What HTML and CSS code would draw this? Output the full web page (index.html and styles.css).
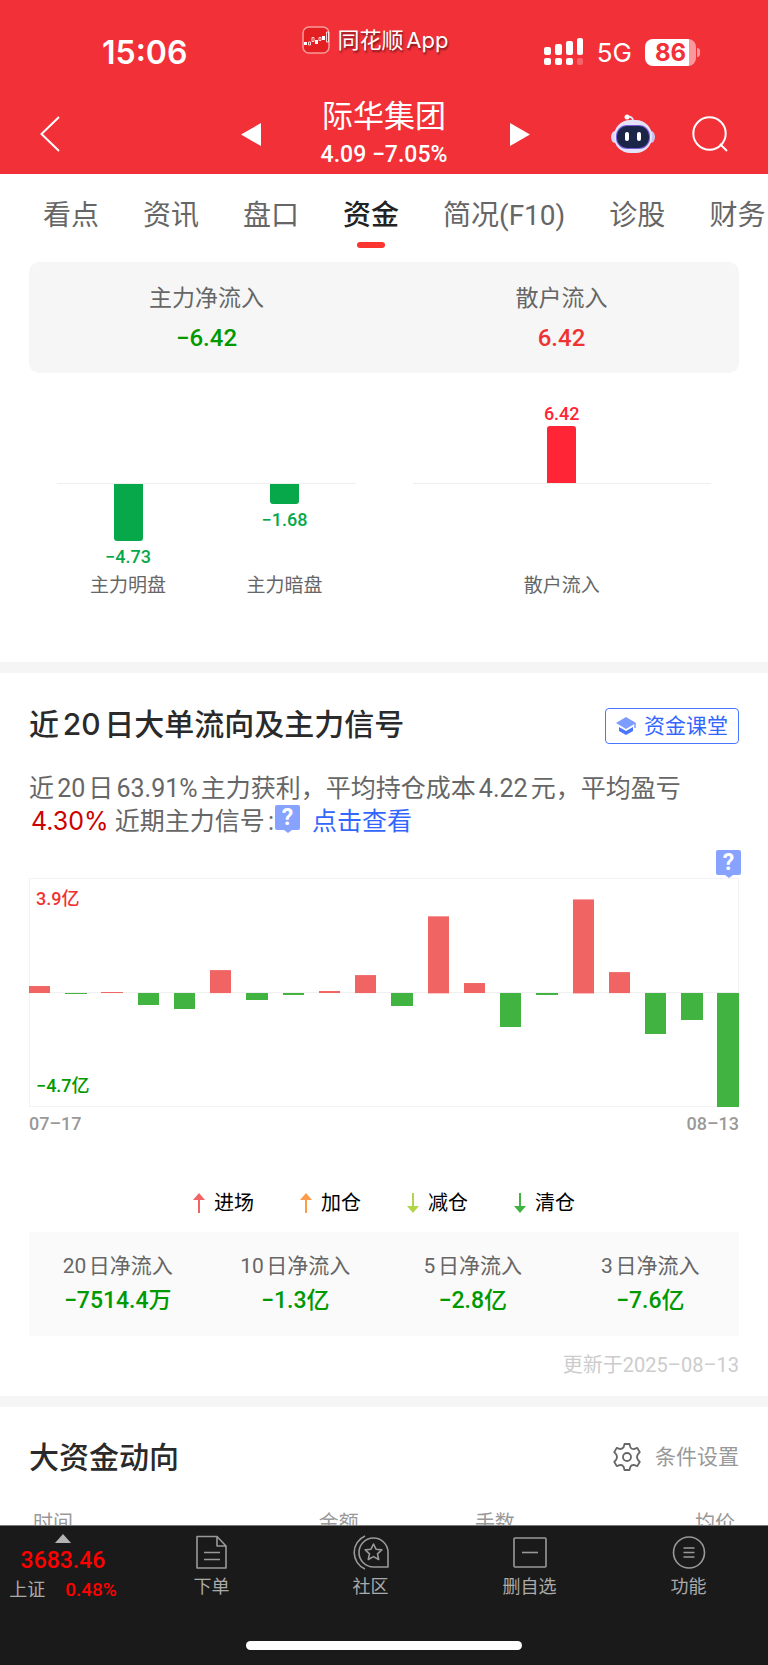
FILE: index.html
```
<!DOCTYPE html>
<html lang="zh-CN">
<head>
    <meta charset="UTF-8">
    <meta name="viewport" content="width=device-width, initial-scale=1.0">
    <title>际华集团 资金</title>
    <link rel="stylesheet" href="styles.css">
</head>
<body>
    <header class="header">
        <div class="status">
            <span class="time">15:06</span>
            <div class="app">
                <svg width="28" height="28" viewBox="0 0 28 28">
                    <rect x="1" y="1" width="26" height="26" rx="6" fill="#e31f22" stroke="#f79a9c" stroke-width="1.5"/>
                    <path d="M2 16h3v3H2zM13 14h3v4h-3zM20 10h3v4h-3z" fill="#fff"/>
                    <path d="M6.500 16h2v3h-2zM10 11.500h2v4h-2zM17 11.500h2v3h-2zM24.500 6h2v10h-2z" fill="none" stroke="#fff" stroke-width=".8"/>
                </svg>
                <span>同花顺App</span>
            </div>
            <div class="phone">
                <svg width="40" height="28" viewBox="0 0 40 28" fill="#fff">
                    <rect x="0" y="9" width="7" height="8" rx="2"/>
                    <rect x="11" y="6" width="7" height="11" rx="2"/>
                    <rect x="22" y="3" width="7" height="14" rx="2"/>
                    <rect x="33" y="0" width="6" height="17" rx="2"/>
                    <rect x="0" y="20" width="7" height="7" rx="2"/>
                    <rect x="11" y="20" width="7" height="7" rx="2"/>
                    <rect x="22" y="20" width="7" height="7" rx="2"/>
                    <rect x="33" y="20" width="6" height="7" rx="2" opacity=".25"/>
                </svg>
                <span class="net">5G</span>
                <span class="battery">86</span>
            </div>
        </div>
        <div class="titlebar">
            <div class="tleft">
                <button class="icon" aria-label="返回">
                    <svg width="20" height="36" viewBox="0 0 20 36" fill="none" stroke="#fff" stroke-width="2"><path d="M19 1L1.500 18L19 35"/></svg>
                </button>
                <button class="icon" aria-label="上一只">
                    <svg width="20" height="23" viewBox="0 0 20 23" fill="#fff"><path d="M20 0v23L0 11.500z"/></svg>
                </button>
            </div>
            <div class="stock">
                <h1>际华集团</h1>
                <p class="num">4.09 −7.05%</p>
            </div>
            <div class="tright">
                <button class="icon" aria-label="下一只">
                    <svg width="20" height="23" viewBox="0 0 20 23" fill="#fff"><path d="M0 0v23l20-11.500z"/></svg>
                </button>
                <button class="icon robot" aria-label="智能助手">
                    <svg width="44" height="40" viewBox="0 0 44 40">
                        <path d="M16 3q6-1 6 4" fill="none" stroke="#e6e4fa" stroke-width="2"/>
                        <circle cx="16" cy="3" r="2.500" fill="#fff"/>
                        <ellipse cx="4" cy="23" rx="4" ry="6" fill="#d9d5f5"/>
                        <ellipse cx="40" cy="23" rx="4" ry="6" fill="#c9c4ef"/>
                        <rect x="3" y="6" width="38" height="33" rx="16" fill="#e4e3f8"/>
                        <rect x="5" y="11" width="34" height="24" rx="11" fill="#7a5be0"/>
                        <rect x="6" y="12" width="32" height="22" rx="10" fill="#1b2547"/>
                        <rect x="14" y="18" width="4" height="9" rx="2" fill="#fff"/>
                        <rect x="26" y="18" width="4" height="9" rx="2" fill="#fff"/>
                    </svg>
                </button>
                <button class="icon" aria-label="搜索">
                    <svg width="36" height="36" viewBox="0 0 36 36" fill="none" stroke="#fff" stroke-width="2"><circle cx="17.500" cy="17.500" r="16.200"/><path d="M28 28l7 7"/></svg>
                </button>
            </div>
        </div>
    </header>

    <nav class="tabs">
        <a href="#">看点</a>
        <a href="#">资讯</a>
        <a href="#">盘口</a>
        <a href="#" class="active">资金</a>
        <a href="#">简况(F10)</a>
        <a href="#">诊股</a>
        <a href="#">财务</a>
    </nav>

    <main>
        <section class="flow">
            <div class="card">
                <div>
                    <p>主力净流入</p>
                    <p class="num green">−6.42</p>
                </div>
                <div>
                    <p>散户流入</p>
                    <p class="num red">6.42</p>
                </div>
            </div>
            <div class="charts">
                <div class="chart">
                    <div class="col">
                        <div class="up"></div>
                        <div class="down"><i style="height:57px"></i><span class="num">−4.73</span></div>
                        <p>主力明盘</p>
                    </div>
                    <div class="col">
                        <div class="up"></div>
                        <div class="down"><i style="height:20px"></i><span class="num">−1.68</span></div>
                        <p>主力暗盘</p>
                    </div>
                </div>
                <div class="chart single">
                    <div class="col">
                        <div class="up"><span class="num">6.42</span><i style="height:57px"></i></div>
                        <div class="down"></div>
                        <p>散户流入</p>
                    </div>
                </div>
            </div>
        </section>

        <section class="signal">
            <div class="head">
                <h2>近20日大单流向及主力信号</h2>
                <button class="course">
                    <svg width="20" height="20" viewBox="0 0 20 20">
                        <path d="M10 1L0 7l10 6 10-6z" fill="#7d9cff"/>
                        <path d="M3 11v4l7 4 7-4v-4l-7 4z" fill="#4a76ff"/>
                        <path d="M19 7v5" stroke="#7d9cff" stroke-width="1.500"/>
                    </svg>
                    资金课堂
                </button>
            </div>
            <p class="desc">近20日63.91%主力获利，平均持仓成本4.22元，平均盈亏<br><b>4.30%</b> 近期主力信号:<button class="help" aria-label="说明">?</button><a href="#">点击查看</a></p>
            <div class="history">
                <button class="help" aria-label="图表说明">?</button>
                <span class="num max">3.9亿</span>
                <span class="num min">−4.7亿</span>
                <div class="bars" id="bars"></div>
            </div>
            <div class="dates num"><span>07–17</span><span>08–13</span></div>
            <ul class="legend">
                <li><svg width="12" height="20" viewBox="0 0 12 20" fill="#f06464"><path d="M6 0l6 7H7v13H5V7H0z"/></svg>进场</li>
                <li><svg width="12" height="20" viewBox="0 0 12 20" fill="#ff9c4a"><path d="M6 0l6 7H7v13H5V7H0z"/></svg>加仓</li>
                <li><svg width="12" height="20" viewBox="0 0 12 20" fill="#b2d54c"><path d="M6 20l6-7H7V0H5v13H0z"/></svg>减仓</li>
                <li><svg width="12" height="20" viewBox="0 0 12 20" fill="#41b341"><path d="M6 20l6-7H7V0H5v13H0z"/></svg>清仓</li>
            </ul>
            <div class="stats">
                <div><p>20日净流入</p><p class="num green">−7514.4万</p></div>
                <div><p>10日净流入</p><p class="num green">−1.3亿</p></div>
                <div><p>5日净流入</p><p class="num green">−2.8亿</p></div>
                <div><p>3日净流入</p><p class="num green">−7.6亿</p></div>
            </div>
            <p class="update">更新于2025–08–13</p>
        </section>

        <section class="big">
            <div class="head">
                <h2>大资金动向</h2>
                <button class="setting">
                    <svg width="28" height="28" viewBox="0 0 28 28" fill="none" stroke="#666" stroke-width="1.800" stroke-linejoin="round">
                        <path d="M11.500 1h5l.8 3q.4 1.200 1.700 1.800t2.500.1l2.800-1 2.500 4.300-2 2.200q-1.600 2.600 0 5.200l2 2.200-2.500 4.300-2.800-1q-3-.5-4.200 1.900l-.8 3h-5l-.8-3q-1.200-2.400-4.200-1.900l-2.800 1L1.200 18.800l2-2.200q1.600-2.600 0-5.200l-2-2.200 2.500-4.300 2.800 1q3 .5 4.200-1.900z"/>
                        <circle cx="14" cy="14" r="4"/>
                    </svg>
                    条件设置
                </button>
            </div>
            <table>
                <thead>
                    <tr><th>时间</th><th>金额</th><th>手数</th><th>均价</th></tr>
                </thead>
            </table>
        </section>
    </main>

    <footer class="toolbar">
        <div class="menu">
            <a href="#" class="index">
                <svg width="16" height="9" viewBox="0 0 16 9" fill="#b3b3b3"><path d="M8 0l8 9H0z"/></svg>
                <span class="num point">3683.46</span>
                <span class="rate">上证<span class="num">0.48%</span></span>
            </a>
            <a href="#">
                <svg width="36" height="36" viewBox="0 0 36 36" fill="none" stroke="#999" stroke-width="1.600" stroke-linejoin="round"><path d="M3 2.500h20l9 9.500v22H3zM23 2.500V12h9M10 18.500h16M10 25.500h16"/></svg>
                下单
            </a>
            <a href="#">
                <svg width="36" height="36" viewBox="0 0 36 36" fill="none" stroke="#999" stroke-width="1.600" stroke-linejoin="round">
                    <path d="M12 2A18 18 0 0 0 12 35"/>
                    <path d="M35 33H20.500A14.500 14.500 0 1 1 35 18.500z"/>
                    <path d="M20.500 10l2.500 5.200 5.800.7-4.300 3.900 1.200 5.700-5.200-2.900-5.200 2.900 1.200-5.700-4.300-3.900 5.800-.7z"/>
                </svg>
                社区
            </a>
            <a href="#">
                <svg width="36" height="36" viewBox="0 0 36 36" fill="none" stroke="#999" stroke-width="1.600"><rect x="2" y="4" width="32" height="29" rx="1"/><path d="M10 18.500h16"/></svg>
                删自选
            </a>
            <a href="#">
                <svg width="36" height="36" viewBox="0 0 36 36" fill="none" stroke="#999" stroke-width="1.600"><circle cx="18" cy="18.500" r="15.500"/><path d="M12.500 14h11M12.500 18.500h11M12.500 23h11"/></svg>
                功能
            </a>
        </div>
        <div class="home"></div>
    </footer>

    <script>
        // net inflow of each day, 114 = half of the chart
        var data = [7, -1, 1, -12, -16, 23, -7, -2, 2, 18, -13, 77, 10, -34, -2, 94, 21, -41, -27, -114];

        function drawBars(){
            let html = '';
            for(let i = 0; i < data.length; i++){
                let cls = data[i] > 0 ? 'rise' : 'fall';
                html += `<i class="${cls}" style="height:${Math.abs(data[i]) / 228 * 100}%"></i>`;
            }
            document.querySelector("#bars").innerHTML = html;
        }
        drawBars();
    </script>
</body>
</html>
```
FILE: styles.css
```
*{
    margin: 0;
    padding: 0;
    box-sizing: border-box;
}
body {
    background-color: #fff;
    color: #666;
    font-family: Roboto, "Noto Sans CJK SC", sans-serif;
    text-autospace: normal;
}
a {
    text-decoration: none;
    color: inherit;
}
button {
    border: 0;
    background: none;
    font-family: inherit;
    color: inherit;
    cursor: pointer;
}
svg {
    display: block;
    flex-shrink: 0;
}
.num {
    font-family: Roboto, "Noto Sans CJK SC", sans-serif;
    font-weight: 500;
    text-autospace: no-autospace;
}
.green {
    color: #090;
}
.red {
    color: #ef3333;
}

/* header */
.header {
    background-color: #f23038;
    color: #fff;
}
.status {
    display: grid;
    grid-template-columns: 1fr auto 1fr;
    align-items: start;
    height: 96px;
    padding: 24px 72px 0 54px;
    font-family: Inter, "Noto Sans CJK SC", sans-serif;
}
.time {
    margin-top: 13px;
    margin-left: 48px;
    font-size: 32px;
    line-height: 32px;
    font-weight: 600;
}
.app {
    display: flex;
    align-items: center;
    gap: 8px;
    height: 32px;
    font-size: 22px;
    line-height: 28px;
    text-shadow: 1px 2px 2px rgba(0, 0, 0, 0.5);
}
.phone {
    display: flex;
    align-items: center;
    justify-content: flex-end;
    gap: 13px;
    margin-top: 13px;
    height: 30px;
}
.net {
    font-size: 26px;
}
.battery {
    position: relative;
    width: 51px;
    height: 27px;
    border-radius: 8px;
    background: linear-gradient(to right, #fff 86%, #f9979b 86%);
    color: #f23038;
    font-size: 24px;
    line-height: 27px;
    font-weight: 700;
    text-align: center;
}
.battery::after {
    content: "";
    position: absolute;
    right: -4px;
    top: 9px;
    width: 3px;
    height: 9px;
    border-radius: 0 3px 3px 0;
    background-color: #f9979b;
}
.titlebar {
    display: grid;
    grid-template-columns: 1fr auto 1fr;
    height: 78px;
    padding: 0 40px;
}
.tleft, .tright {
    display: flex;
    align-items: center;
    justify-content: space-between;
    height: 76px;
}
.tleft {
    padding-right: 60px;
}
.tright {
    padding-left: 63px;
}
.robot {
    margin-left: 44px;
}
.stock {
    padding-top: 2px;
    text-align: center;
}
.stock h1 {
    font-size: 31px;
    line-height: 38px;
    font-weight: 400;
}
.stock p {
    font-size: 23px;
    line-height: 38px;
}

/* tabs */
.tabs {
    display: flex;
    gap: 44px;
    height: 88px;
    padding-left: 43px;
    overflow: hidden;
    font-size: 28px;
    line-height: 84px;
    white-space: nowrap;
}
.tabs .active {
    position: relative;
    color: #222;
    font-weight: 500;
}
.tabs .active::after {
    content: "";
    position: absolute;
    left: 14px;
    right: 14px;
    top: 68px;
    height: 6px;
    border-radius: 3px;
    background-color: #fb3530;
}

/* sections */
section {
    padding: 0 29px;
    border-bottom: 11px solid #f5f5f5;
}
.card {
    display: flex;
    height: 111px;
    padding-top: 19px;
    border-radius: 10px;
    background-color: #f6f6f6;
    text-align: center;
}
.card div {
    flex: 1;
    font-size: 23px;
    line-height: 36px;
}
.card .num {
    font-size: 24px;
    line-height: 42px;
}
.charts {
    display: flex;
    gap: 57px;
    height: 289px;
    padding: 0 28px;
}
.chart {
    flex: 1;
    display: flex;
    justify-content: space-between;
    padding: 0 32px;
    /* zero line */
    background: linear-gradient(#eee, #eee) 0 110px / 100% 1px no-repeat;
}
.single {
    justify-content: center;
}
.col {
    width: 78px;
    text-align: center;
    font-size: 19px;
    white-space: nowrap;
}
.up, .down {
    display: flex;
    flex-direction: column;
    align-items: center;
    font-size: 18px;
    line-height: 24px;
}
.up {
    justify-content: flex-end;
    height: 110px;
    color: #ff2436;
}
.down {
    height: 88px;
    padding-top: 1px;
    gap: 4px;
    color: #07a84a;
}
.up i, .down i {
    width: 29px;
    background-color: currentColor;
}
.up i {
    border-radius: 3px 3px 0 0;
}
.down i {
    border-radius: 0 0 3px 3px;
}
.col p {
    line-height: 30px;
}
.head {
    display: flex;
    align-items: flex-end;
    justify-content: space-between;
}
h2 {
    color: #2a2a2a;
    font-family: Inter, "Noto Sans CJK SC", sans-serif;
    font-size: 30px;
    line-height: 40px;
    font-weight: 500;
}
.signal {
    padding-top: 31px;
}
.course {
    display: flex;
    align-items: center;
    gap: 8px;
    height: 36px;
    padding: 0 10px;
    border: 1px solid #4a76ff;
    border-radius: 4px;
    color: #36f;
    font-size: 21px;
    line-height: 28px;
}
.desc {
    margin-top: 29px;
    font-size: 25px;
    line-height: 32px;
}
.desc b {
    margin-left: 2px;
    color: #c00;
    font-family: Inter, sans-serif;
    font-weight: 400;
}
.desc a {
    margin-left: 12px;
    color: #36f;
}
.help {
    position: relative;
    width: 25px;
    height: 25px;
    border-radius: 2px;
    background-color: #87a3ff;
    color: #fff;
    font-size: 23px;
    line-height: 25px;
    font-weight: 700;
}
.help::after {
    content: "";
    position: absolute;
    left: 9px;
    top: 25px;
    border: 4px solid transparent;
    border-top: 3px solid #87a3ff;
    border-bottom: 0;
}
.desc .help {
    margin-left: 1px;
    vertical-align: top;
}
.history {
    position: relative;
    height: 229px;
    margin-top: 40px;
    border: 1px solid #f3f3f3;
    background: linear-gradient(#f0f0f0, #f0f0f0) 0 50% / 100% 1px no-repeat;
}
.history .help {
    position: absolute;
    right: -3px;
    top: -29px;
}
.max, .min {
    position: absolute;
    left: 6px;
    font-size: 18px;
    line-height: 26px;
}
.max {
    top: 7px;
    color: #ef3333;
}
.min {
    bottom: 7px;
    color: #090;
}
.bars {
    display: flex;
    justify-content: space-between;
    height: 100%;
    margin: 0 -1px;
}
.bars i {
    width: 3%;
    margin-top: 114px;
}
.rise {
    transform: translateY(-100%);
    background-color: #f06464;
}
.fall {
    background-color: #41b341;
}
.dates {
    display: flex;
    justify-content: space-between;
    color: #999;
    font-size: 18px;
    line-height: 34px;
}
.legend {
    display: flex;
    justify-content: center;
    gap: 46px;
    margin-top: 47px;
    color: #000;
    font-size: 20px;
    line-height: 30px;
    list-style: none;
}
.legend li {
    display: flex;
    align-items: center;
    gap: 9px;
}
.stats {
    display: flex;
    height: 104px;
    margin-top: 14px;
    padding-top: 18px;
    background-color: #fafafa;
    text-align: center;
}
.stats div {
    flex: 1;
    font-size: 21px;
    line-height: 32px;
}
.stats .num {
    font-size: 23px;
    line-height: 38px;
}
.update {
    height: 60px;
    color: #ccc;
    font-size: 20px;
    line-height: 58px;
    text-align: right;
    text-autospace: no-autospace;
}
.big {
    padding-top: 30px;
    border-bottom: 0;
}
.setting {
    display: flex;
    align-items: center;
    gap: 14px;
    height: 40px;
    color: #999;
    font-size: 21px;
    line-height: 28px;
}
table {
    width: 100%;
    margin-top: 31px;
    table-layout: fixed;
    border-collapse: collapse;
}
th {
    padding: 0 4px;
    color: #999;
    font-size: 20px;
    line-height: 30px;
    font-weight: 400;
    text-align: right;
}
th:first-child {
    width: 22%;
    text-align: left;
}
th:nth-child(2) {
    width: 25%;
}
th:nth-child(3) {
    width: 22%;
}

/* bottom toolbar */
.toolbar {
    position: fixed;
    left: 0;
    right: 0;
    bottom: 0;
    height: 140px;
    padding-top: 8px;
    border-top: 1px solid #777;
    background-color: #1a1a1a;
    color: #aaa;
}
.menu {
    display: flex;
    height: 107px;
}
.menu a {
    flex: 1;
    display: flex;
    flex-direction: column;
    align-items: center;
    font-size: 18px;
    line-height: 34px;
}
.menu .index {
    flex: 0 0 132px;
    padding-right: 6px;
}
.point {
    color: #f00;
    font-size: 23px;
    line-height: 36px;
}
.rate {
    display: flex;
    gap: 20px;
    line-height: 22px;
}
.rate .num {
    color: #f00;
    font-size: 19px;
}
.home {
    width: 36%;
    height: 9px;
    margin: 0 auto;
    border-radius: 5px;
    background-color: #fff;
}
```
